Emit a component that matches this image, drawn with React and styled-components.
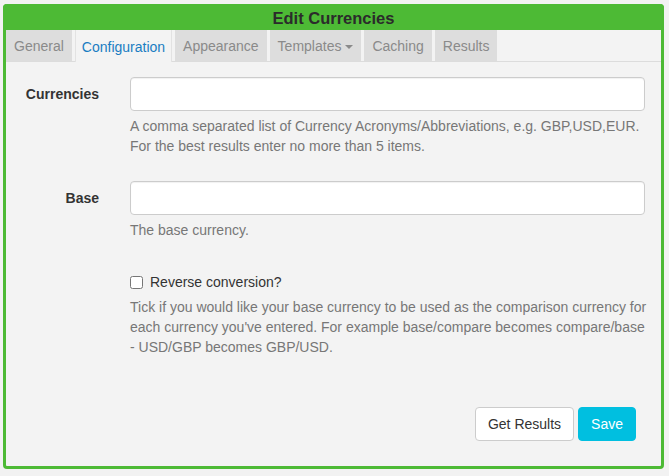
import styled, { createGlobalStyle } from "styled-components"

const GlobalStyle = createGlobalStyle`
  html, body {
    margin: 0;
    padding: 0;
    background: #f2f2f2;
    font-family: "Liberation Sans", Arial, sans-serif;
    font-size: 14px;
    color: #333;
  }
  * {
    box-sizing: border-box;
  }
`

const Page = styled.div`
  width: 669px;
  height: 476px;
  padding: 4px 5px 7px 3px;
`

const Frame = styled.div`
  height: 100%;
  border: 3px solid #4dba35;
  border-top: none;
  border-radius: 4px;
  background: #f3f3f3;
  display: flex;
  flex-direction: column;
`

const Header = styled.div`
  height: 26px;
  margin: 0 -3px;
  background: #4dba35;
  border-radius: 4px 4px 0 0;
  color: #2b2b2b;
  font-weight: 700;
  font-size: 16.5px;
  line-height: 28px;
  text-align: center;
`

const TabBar = styled.div`
  display: flex;
  gap: 3px;
  height: 32px;
  border-bottom: 1px solid #dcdcdc;
`

const Tab = styled.div`
  padding: ${(p) => (p.$active ? "1px 6px 0" : "1px 8px 0")};
  font-size: 14px;
  color: ${(p) => (p.$active ? "#1a7dc2" : "#8a8a8a")};
  background: ${(p) => (p.$active ? "#f3f3f3" : "#dddddd")};
  border-left: ${(p) => (p.$active ? "1px solid #e2e2e2" : "none")};
  border-right: ${(p) => (p.$active ? "1px solid #e2e2e2" : "none")};
  height: ${(p) => (p.$active ? "32px" : "31px")};
  display: flex;
  align-items: center;
  gap: 4px;
`

const Caret = styled.span`
  display: inline-block;
  width: 0;
  height: 0;
  margin-top: 1px;
  border-left: 4px solid transparent;
  border-right: 4px solid transparent;
  border-top: 4px solid #8a8a8a;
`

const Body = styled.div`
  flex: 1;
  padding: 15px 16px 0 0;
  display: flex;
  flex-direction: column;
`

const Row = styled.div`
  display: grid;
  grid-template-columns: 124px 1fr;
  margin-bottom: 25px;
`

const Label = styled.label`
  padding-right: 31px;
  text-align: right;
  font-weight: 700;
  line-height: 34px;
`

const Input = styled.input`
  display: block;
  width: 100%;
  height: 34px;
  padding: 6px 12px;
  border: 1px solid #cccccc;
  border-radius: 4px;
  background: #fff;
  font-family: inherit;
  font-size: 14px;
  box-shadow: inset 0 1px 1px rgba(0, 0, 0, 0.06);
  &:focus {
    outline: none;
  }
`

const Help = styled.div`
  margin-top: 5px;
  margin-right: ${(p) => (p.$wide ? "-12px" : "0")};
  color: #777777;
  line-height: 20px;
`

const NoWrap = styled.span`
  white-space: nowrap;
`

const CheckLine = styled.label`
  display: flex;
  align-items: center;
  gap: 7px;
  margin-top: 7px;
  line-height: 20px;
  color: #333;
`

const Check = styled.input`
  margin: 0;
  width: 13px;
  height: 13px;
`

const Actions = styled.div`
  margin-top: 25px;
  padding-right: 9px;
  display: flex;
  justify-content: flex-end;
  gap: 4px;
`

const Button = styled.button`
  height: 34px;
  padding: 0 12px;
  border-radius: 4px;
  font-family: inherit;
  font-size: 14px;
  border: 1px solid ${(p) => (p.$primary ? "#00bfe0" : "#cccccc")};
  background: ${(p) => (p.$primary ? "#00bfe0" : "#ffffff")};
  color: ${(p) => (p.$primary ? "#ffffff" : "#333333")};
`

const tabs = ["General", "Configuration", "Appearance", "Templates", "Caching", "Results"]

export default function App() {
  return (
    <Page>
      <GlobalStyle />
      <Frame>
        <Header>Edit Currencies</Header>
        <TabBar>
          {tabs.map((t) => (
            <Tab key={t} $active={t === "Configuration"}>
              {t}
              {t === "Templates" && <Caret />}
            </Tab>
          ))}
        </TabBar>
        <Body>
          <Row>
            <Label>Currencies</Label>
            <div>
              <Input type="text" />
              <Help>
                A comma separated list of Currency Acronyms/Abbreviations, e.g. GBP,USD,EUR.
                <br />
                For the best results enter no more than 5 items.
              </Help>
            </div>
          </Row>
          <Row>
            <Label>Base</Label>
            <div>
              <Input type="text" />
              <Help>The base currency.</Help>
            </div>
          </Row>
          <Row>
            <span />
            <div>
              <CheckLine>
                <Check type="checkbox" />
                Reverse conversion?
              </CheckLine>
              <Help $wide>
                Tick if you would like your base currency to be used as the comparison currency for
                each currency you've entered. For example base/compare becomes compare/base{" "}
                <NoWrap>- USD/GBP</NoWrap> becomes GBP/USD.
              </Help>
            </div>
          </Row>
          <Actions>
            <Button>Get Results</Button>
            <Button $primary>Save</Button>
          </Actions>
        </Body>
      </Frame>
    </Page>
  )
}
